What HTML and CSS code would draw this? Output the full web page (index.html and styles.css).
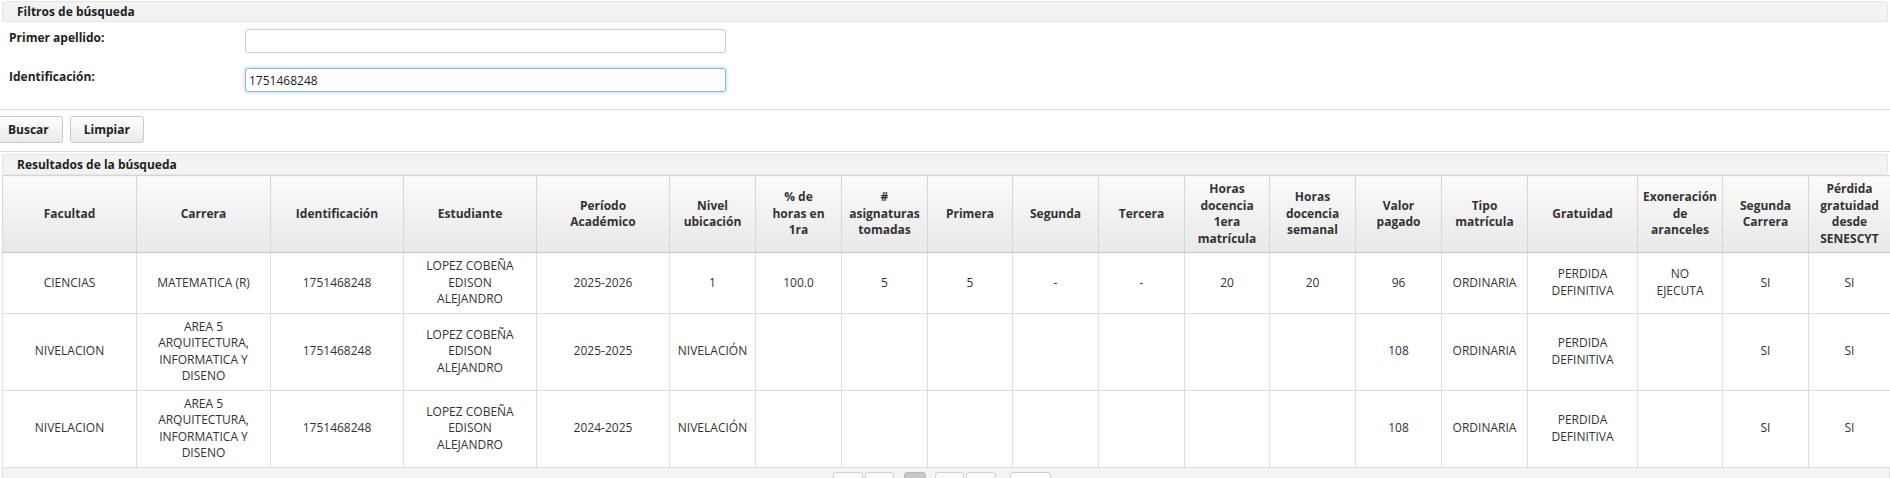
FILE: index.html
```html
<!DOCTYPE html>
<html lang="es">
<head>
<meta charset="utf-8">
<title>Consulta de matrículas</title>
<link rel="stylesheet" href="styles.css">
</head>
<body>
<div class="page">
  <section class="filters">
    <div class="bar">Filtros de búsqueda</div>
    <div class="form">
      <label class="lbl">Primer apellido:</label>
      <input class="txt" type="text" value="">
      <label class="lbl">Identificación:</label>
      <input class="txt txt-focus" type="text" value="1751468248">
    </div>
  </section>
  <div class="actions">
    <button class="btn btn-first" type="button">Buscar</button>
    <button class="btn" type="button">Limpiar</button>
  </div>
  <section class="results">
    <div class="bar">Resultados de la búsqueda</div>
    <table class="grid">
      <colgroup>
        <col style="width:134px"><col style="width:134px"><col style="width:133px"><col style="width:133px"><col style="width:133px">
        <col style="width:86px"><col style="width:86px"><col style="width:86px"><col style="width:85px"><col style="width:86px">
        <col style="width:86px"><col style="width:85px"><col style="width:86px"><col style="width:86px"><col style="width:86px">
        <col style="width:110px"><col style="width:85px"><col style="width:86px"><col style="width:82px">
      </colgroup>
      <thead>
        <tr>
          <th>Facultad</th>
          <th>Carrera</th>
          <th>Identificación</th>
          <th>Estudiante</th>
          <th>Período<br>Académico</th>
          <th>Nivel<br>ubicación</th>
          <th>% de<br>horas en<br>1ra</th>
          <th>#<br>asignaturas<br>tomadas</th>
          <th>Primera</th>
          <th>Segunda</th>
          <th>Tercera</th>
          <th>Horas<br>docencia<br>1era<br>matrícula</th>
          <th>Horas<br>docencia<br>semanal</th>
          <th>Valor<br>pagado</th>
          <th>Tipo<br>matrícula</th>
          <th>Gratuidad</th>
          <th>Exoneración<br>de<br>aranceles</th>
          <th>Segunda<br>Carrera</th>
          <th>Pérdida<br>gratuidad<br>desde<br>SENESCYT</th>
        </tr>
      </thead>
      <tbody>
        <tr class="r1">
          <td>CIENCIAS</td>
          <td>MATEMATICA (R)</td>
          <td>1751468248</td>
          <td>LOPEZ COBEÑA<br>EDISON<br>ALEJANDRO</td>
          <td>2025-2026</td>
          <td>1</td>
          <td>100.0</td>
          <td>5</td>
          <td>5</td>
          <td>-</td>
          <td>-</td>
          <td>20</td>
          <td>20</td>
          <td>96</td>
          <td>ORDINARIA</td>
          <td>PERDIDA<br>DEFINITIVA</td>
          <td>NO<br>EJECUTA</td>
          <td>SI</td>
          <td>SI</td>
        </tr>
        <tr>
          <td>NIVELACION</td>
          <td>AREA 5<br>ARQUITECTURA,<br>INFORMATICA Y<br>DISENO</td>
          <td>1751468248</td>
          <td>LOPEZ COBEÑA<br>EDISON<br>ALEJANDRO</td>
          <td>2025-2025</td>
          <td>NIVELACIÓN</td>
          <td></td><td></td><td></td><td></td><td></td><td></td><td></td>
          <td>108</td>
          <td>ORDINARIA</td>
          <td>PERDIDA<br>DEFINITIVA</td>
          <td></td>
          <td>SI</td>
          <td>SI</td>
        </tr>
        <tr>
          <td>NIVELACION</td>
          <td>AREA 5<br>ARQUITECTURA,<br>INFORMATICA Y<br>DISENO</td>
          <td>1751468248</td>
          <td>LOPEZ COBEÑA<br>EDISON<br>ALEJANDRO</td>
          <td>2024-2025</td>
          <td>NIVELACIÓN</td>
          <td></td><td></td><td></td><td></td><td></td><td></td><td></td>
          <td>108</td>
          <td>ORDINARIA</td>
          <td>PERDIDA<br>DEFINITIVA</td>
          <td></td>
          <td>SI</td>
          <td>SI</td>
        </tr>
      </tbody>
    </table>
    <div class="paginator">
      <span class="pg pg-w30"><span class="ico ico-first"></span></span>
      <span class="pg pg-w29 pg-gap2"><span class="ico ico-prev"></span></span>
      <span class="pg pg-page pg-active"></span>
      <span class="pg pg-w29 pg-gap9"><span class="ico ico-next"></span></span>
      <span class="pg pg-w30 pg-gap2"><span class="ico ico-last"></span></span>
      <span class="pg-select"><span class="ico ico-down"></span></span>
    </div>
  </section>
</div>
</body>
</html>
```
FILE: styles.css
```css
html, body {
  margin: 0;
  padding: 0;
  background: #ffffff;
}

body {
  font-family: "Open Sans", "Noto Sans", sans-serif;
  font-size: 12px;
  color: #333333;
  overflow: hidden;
}

.page {
  width: 1890px;
}

.bar {
  box-sizing: border-box;
  height: 21px;
  margin: 0 2px;
  padding-left: 14px;
  background: #f3f3f3;
  border: 1px solid #e6e6e6;
  border-radius: 3px;
  font-weight: 700;
  line-height: 19px;
  color: #222222;
}

.filters {
  padding-top: 1px;
  border-bottom: 1px solid #dcdcdc;
}

.form {
  display: grid;
  grid-template-columns: 236px 481px;
  row-gap: 15px;
  padding: 7px 0 17px 9px;
}

.lbl {
  font-weight: 700;
  line-height: 16px;
  padding-top: 1px;
  color: #222222;
}

.txt {
  box-sizing: border-box;
  height: 24px;
  margin: 0;
  padding: 0 3px;
  border: 1px solid #cccccc;
  border-radius: 3px;
  background: #ffffff;
  font-family: "Open Sans", "Noto Sans", sans-serif;
  font-size: 12px;
  color: #222222;
  outline: none;
}

.txt-focus {
  border-color: #86b7e8;
  box-shadow: 0 0 4px #a9d0f5;
}

.actions {
  display: flex;
  gap: 7px;
  padding: 6px 0 8px;
  border-bottom: 1px solid #dcdcdc;
}

.btn {
  box-sizing: border-box;
  height: 27px;
  margin: 0;
  padding: 0 13px;
  border: 1px solid #c9c9c9;
  border-radius: 3px;
  background: linear-gradient(#ffffff, #e9e9e9);
  font-family: "Open Sans", "Noto Sans", sans-serif;
  font-size: 12px;
  font-weight: 700;
  color: #222222;
}

.btn-first {
  margin-left: -6px;
}

.results {
  padding-top: 2px;
}

.grid {
  table-layout: fixed;
  border-collapse: collapse;
  width: 1888px;
  margin-left: 2px;
}

.grid th,
.grid td {
  border: 1px solid #dddddd;
  padding: 5px 2px;
  line-height: 16.5px;
  text-align: center;
  vertical-align: middle;
  overflow: hidden;
  white-space: nowrap;
}

.grid th {
  background: linear-gradient(#fbfbfb, #e8e8e8);
  border-color: #d6d6d6;
  border-bottom: 1px solid #c6c6c6;
  font-weight: 700;
  color: #333333;
}

.grid td {
  color: #333333;
}

.grid .r1 td {
  height: 49px;
}

.paginator {
  display: flex;
  justify-content: center;
  align-items: flex-start;
  margin-left: 2px;
  width: 1888px;
  height: 40px;
  padding: 4px 8px 0 0;
  background: #f4f4f4;
  border: 1px solid #dddddd;
  border-top: none;
  box-sizing: border-box;
}

.pg {
  box-sizing: border-box;
  height: 26px;
  border: 1px solid #d2d2d2;
  border-radius: 3px;
  background: linear-gradient(#fdfdfd, #ececec);
  display: flex;
  align-items: center;
  justify-content: center;
}

.pg-w30 { width: 30px; }
.pg-w29 { width: 29px; }
.pg-gap2 { margin-left: 2px; }
.pg-gap9 { margin-left: 9px; }

.pg-page {
  width: 22px;
  margin-left: 10px;
}

.pg-active {
  background: linear-gradient(#c6c6c6, #d8d8d8);
  border-color: #b8b8b8;
}

.ico {
  display: block;
  width: 0;
  height: 0;
  border-top: 4px solid transparent;
  border-bottom: 4px solid transparent;
}

.ico-prev,
.ico-first { border-right: 5px solid #666666; }
.ico-next,
.ico-last { border-left: 5px solid #666666; }

.ico-down {
  border: 4px solid transparent;
  border-top: 5px solid #666666;
  border-bottom: none;
}

.pg-select {
  box-sizing: border-box;
  width: 41px;
  height: 24px;
  margin-left: 14px;
  border: 1px solid #cccccc;
  border-radius: 3px;
  background: #ffffff;
  display: flex;
  align-items: center;
  justify-content: flex-end;
  padding-right: 6px;
}
```
